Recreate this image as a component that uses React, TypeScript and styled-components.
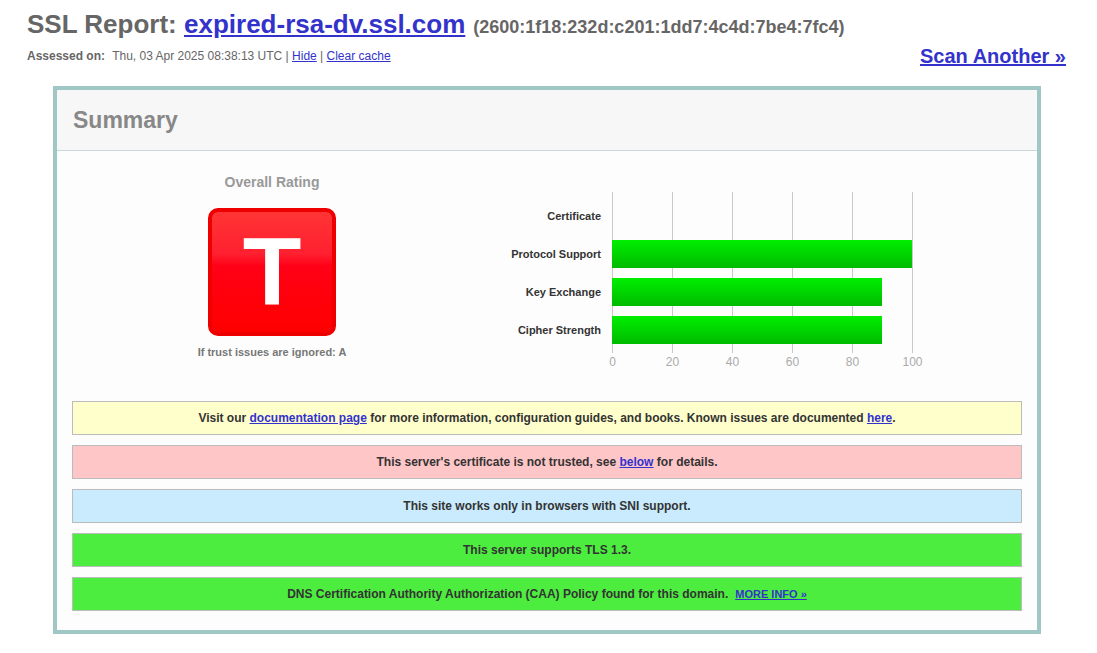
import React from 'react';
import styled, { createGlobalStyle } from 'styled-components';

const GlobalStyle = createGlobalStyle`
  body {
    margin: 0;
    background: #fff;
    font-family: "Liberation Sans", Arial, sans-serif;
    color: #333;
  }
  a { color: #3333cc; }
`;

const Page = styled.div`
  width: 1039px;
  padding: 0 0 20px 27px;
`;

const Title = styled.h1`
  margin: 0;
  padding-top: 7px;
  font-size: 26px;
  line-height: 34px;
  font-weight: bold;
  color: #666;
  white-space: nowrap;
`;

const Ip = styled.span`
  font-size: 18px;
  line-height: 1;
  margin-left: 3px;
`;

const MetaRow = styled.div`
  display: flex;
  justify-content: space-between;
  align-items: center;
  height: 30px;
`;

const Assessed = styled.div`
  font-size: 12px;
  color: #666;
  b { margin-right: 4px; }
`;

const ScanLink = styled.a`
  font-size: 20px;
  font-weight: bold;
`;

const SummaryBox = styled.section`
  margin: 15px 25px 0 26px;
  border: 4px solid #a0c6c6;
  background: #fdfdfd;
`;

const SummaryHeader = styled.div`
  height: 60px;
  display: flex;
  align-items: center;
  padding-left: 16px;
  background: #f7f7f7;
  border-bottom: 1px solid #c8d8d8;
  font-size: 23px;
  font-weight: bold;
  color: #888;
`;

const TopRow = styled.div`
  display: flex;
  padding-top: 23px;
`;

const RatingCol = styled.div`
  width: 430px;
  display: flex;
  flex-direction: column;
  align-items: center;
`;

const RatingTitle = styled.div`
  font-size: 14px;
  line-height: 17px;
  font-weight: bold;
  color: #999;
`;

const Grade = styled.div`
  margin-top: 17px;
  width: 128px;
  height: 128px;
  box-sizing: border-box;
  border: 4px solid #ee0000;
  border-radius: 10px;
  background: linear-gradient(#ff3434 0%, #ff2030 35%, #ff0016 45%, #ff0000 100%);
  color: #fff;
  font-size: 96px;
  font-weight: bold;
  line-height: 120px;
  text-align: center;
`;

const IgnoredNote = styled.div`
  margin-top: 9px;
  font-size: 11px;
  line-height: 14px;
  font-weight: bold;
  color: #777;
`;

const ChartCol = styled.div`
  margin-top: 8px;
`;

const Warnings = styled.div`
  display: flex;
  flex-direction: column;
  gap: 10px;
  padding: 25px 15px 19px;
`;

const Notice = styled.div<{ $bg: string }>`
  background: ${(p) => p.$bg};
  border: 1px solid #bbb;
  padding: 9px 10px;
  font-size: 12px;
  line-height: 14px;
  font-weight: bold;
  color: #333;
  text-align: center;
`;

const MoreInfo = styled.a`
  font-size: 11px;
  margin-left: 7px;
`;

const rows = [
  { label: 'Certificate', value: 0 },
  { label: 'Protocol Support', value: 100 },
  { label: 'Key Exchange', value: 90 },
  { label: 'Cipher Strength', value: 90 },
];

function ScoreChart() {
  const x0 = 125;
  const scale = 3;
  return (
    <svg width="460" height="190" viewBox="0 0 460 190" fontFamily="Liberation Sans, Arial, sans-serif">
      <defs>
        <linearGradient id="bar" x1="0" y1="0" x2="0" y2="1">
          <stop offset="0" stopColor="#00ee00" />
          <stop offset="1" stopColor="#00bb00" />
        </linearGradient>
      </defs>
      {[0, 20, 40, 60, 80, 100].map((t) => (
        <g key={t}>
          <line x1={x0 + t * scale + 0.5} y1="10" x2={x0 + t * scale + 0.5} y2="171" stroke="#c8c8c8" />
          <text x={x0 + t * scale + 0.5} y="184" fontSize="12" fill="#aaa" textAnchor="middle">
            {t}
          </text>
        </g>
      ))}
      {rows.map((r, i) => {
        const cy = 34 + i * 38;
        return (
          <g key={r.label}>
            <text x="114" y={cy + 4} fontSize="11" fontWeight="bold" fill="#333" textAnchor="end">
              {r.label}
            </text>
            {r.value > 0 && <rect x={x0} y={cy - 14} width={r.value * scale} height="28" fill="url(#bar)" />}
          </g>
        );
      })}
    </svg>
  );
}

export default function App() {
  return (
    <Page>
      <GlobalStyle />
      <Title>
        SSL Report: <a href="#">expired-rsa-dv.ssl.com</a>
        <Ip> (2600:1f18:232d:c201:1dd7:4c4d:7be4:7fc4)</Ip>
      </Title>
      <MetaRow>
        <Assessed>
          <b>Assessed on:</b> Thu, 03 Apr 2025 08:38:13 UTC | <a href="#">Hide</a> | <a href="#">Clear cache</a>
        </Assessed>
        <ScanLink href="#">Scan Another &raquo;</ScanLink>
      </MetaRow>

      <SummaryBox>
        <SummaryHeader>Summary</SummaryHeader>
        <TopRow>
          <RatingCol>
            <RatingTitle>Overall Rating</RatingTitle>
            <Grade>T</Grade>
            <IgnoredNote>If trust issues are ignored: A</IgnoredNote>
          </RatingCol>
          <ChartCol>
            <ScoreChart />
          </ChartCol>
        </TopRow>

        <Warnings>
          <Notice $bg="#ffffcc">
            Visit our <a href="#">documentation page</a> for more information, configuration guides, and books. Known
            issues are documented <a href="#">here</a>.
          </Notice>
          <Notice $bg="#ffc6c8">
            This server's certificate is not trusted, see <a href="#">below</a> for details.
          </Notice>
          <Notice $bg="#c9ebfd">This site works only in browsers with SNI support.</Notice>
          <Notice $bg="#4ded3f">This server supports TLS 1.3.</Notice>
          <Notice $bg="#4ded3f">
            DNS Certification Authority Authorization (CAA) Policy found for this domain.
            <MoreInfo href="#">MORE INFO &raquo;</MoreInfo>
          </Notice>
        </Warnings>
      </SummaryBox>
    </Page>
  );
}
